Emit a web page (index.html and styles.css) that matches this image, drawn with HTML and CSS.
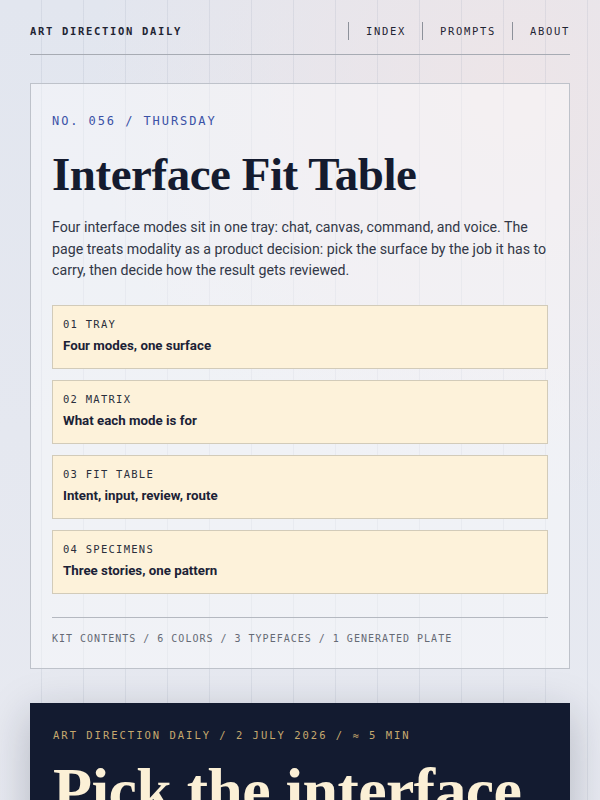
FILE: index.html
```html
<!DOCTYPE html>
<html lang="en">
<head>
<meta charset="utf-8">
<title>Interface Fit Table</title>
<link rel="stylesheet" href="styles.css">
</head>
<body>
<div class="page">
  <header class="masthead">
    <div class="brand">ART DIRECTION DAILY</div>
    <nav class="nav">
      <a class="nav-link">INDEX</a>
      <a class="nav-link">PROMPTS</a>
      <a class="nav-link">ABOUT</a>
    </nav>
  </header>

  <section class="card">
    <div class="eyebrow">NO. 056 / THURSDAY</div>
    <h1 class="title">Interface Fit Table</h1>
    <p class="lede">Four interface modes sit in one tray: chat, canvas, command, and voice. The page treats modality as a product decision: pick the surface by the job it has to carry, then decide how the result gets reviewed.</p>
    <ol class="toc">
      <li class="toc-item"><span class="toc-num">01 TRAY</span><span class="toc-title">Four modes, one surface</span></li>
      <li class="toc-item"><span class="toc-num">02 MATRIX</span><span class="toc-title">What each mode is for</span></li>
      <li class="toc-item"><span class="toc-num">03 FIT TABLE</span><span class="toc-title">Intent, input, review, route</span></li>
      <li class="toc-item"><span class="toc-num">04 SPECIMENS</span><span class="toc-title">Three stories, one pattern</span></li>
    </ol>
    <div class="kit">KIT CONTENTS / 6 COLORS / 3 TYPEFACES / 1 GENERATED PLATE</div>
  </section>

  <section class="plate">
    <div class="plate-eyebrow">ART DIRECTION DAILY / 2 JULY 2026 / ≈ 5 MIN</div>
    <h2 class="plate-title">Pick the interface</h2>
  </section>
</div>
</body>
</html>
```

FILE: styles.css
```css
* { box-sizing: border-box; }
html, body { margin: 0; padding: 0; }
body {
  min-height: 800px;
  background:
    repeating-linear-gradient(90deg, transparent 0 41px, rgba(150,160,180,0.18) 41px 42px),
    radial-gradient(circle at 85% 10%, #ede5e8 0, rgba(237,229,232,0) 45%),
    linear-gradient(180deg, #e2e6ef 0%, #e8eaf1 100%);
  font-family: "Roboto", "Liberation Sans", sans-serif;
  color: #1b2236;
  overflow: hidden;
}
.page { padding: 0 30px; }

.masthead {
  display: flex;
  justify-content: space-between;
  align-items: center;
  padding: 22px 0 14px;
  border-bottom: 1px solid #a7abb3;
}
.brand, .nav-link {
  font-family: "DejaVu Sans Mono", "Liberation Mono", monospace;
  font-size: 10.5px;
  letter-spacing: 0.16em;
  font-weight: bold;
  color: #1f2433;
  line-height: 18px;
}
.nav { display: flex; }
.nav-link {
  border-left: 1px solid #8d919a;
  padding-left: 17px;
  margin-left: 16px;
  font-weight: normal;
}
.nav-link:first-child { margin-left: 0; }

.card {
  margin-top: 28px;
  border: 1px solid #bec2ca;
  background: rgba(255,255,255,0.42);
  padding: 29px 21px 22px;
}
.eyebrow {
  font-family: "DejaVu Sans Mono", "Liberation Mono", monospace;
  font-size: 12px;
  letter-spacing: 0.16em;
  color: #3a52a6;
  line-height: 16px;
}
.title {
  margin: 18px 0 0;
  font-family: "Liberation Serif", "DejaVu Serif", serif;
  font-weight: bold;
  font-size: 47px;
  line-height: 54px;
  letter-spacing: -0.01em;
  color: #141b2f;
}
.lede {
  margin: 16px 0 0;
  font-size: 14.2px;
  line-height: 21.5px;
  color: #323847;
}
.toc {
  list-style: none;
  margin: 23px 0 0;
  padding: 0;
  display: flex;
  flex-direction: column;
  gap: 11px;
}
.toc-item {
  display: flex;
  flex-direction: column;
  gap: 6px;
  background: #fdf2da;
  border: 1px solid #d2cbb9;
  padding: 11px 10px 13px;
}
.toc-num {
  font-family: "DejaVu Sans Mono", "Liberation Mono", monospace;
  font-size: 10.5px;
  letter-spacing: 0.12em;
  color: #2a2f3c;
  line-height: 14px;
}
.toc-title {
  font-size: 13.3px;
  font-weight: bold;
  line-height: 18px;
  color: #1b2236;
}
.kit {
  margin-top: 23px;
  border-top: 1px solid #b4b8c0;
  padding-top: 14px;
  font-family: "DejaVu Sans Mono", "Liberation Mono", monospace;
  font-size: 10px;
  letter-spacing: 0.1em;
  color: #656a75;
  line-height: 14px;
}

.plate {
  margin-top: 34px;
  background: #131b30;
  padding: 24px 23px 40px;
  box-shadow: 0 12px 40px rgba(20,27,48,0.25);
}
.plate-eyebrow {
  font-family: "DejaVu Sans Mono", "Liberation Mono", monospace;
  font-size: 10.5px;
  letter-spacing: 0.19em;
  color: #c6a96e;
  line-height: 16px;
}
.plate-title {
  margin: 12px 0 0;
  font-family: "Liberation Serif", "DejaVu Serif", serif;
  font-weight: bold;
  font-size: 64px;
  line-height: 72px;
  color: #fbf0d6;
  letter-spacing: -0.01em;
}
```
